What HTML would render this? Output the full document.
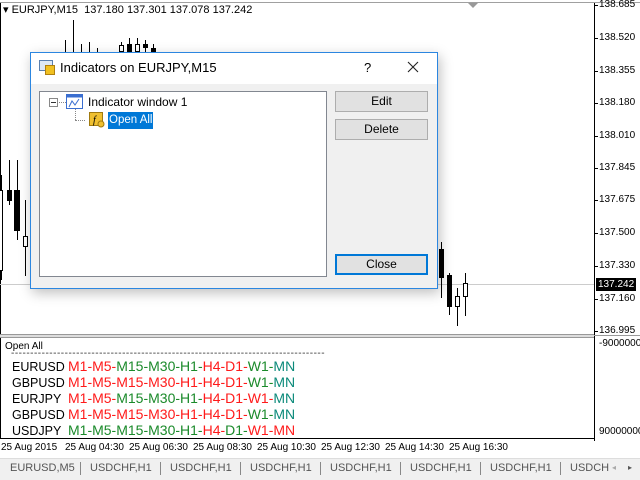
<!DOCTYPE html>
<html><head><style>
*{margin:0;padding:0;box-sizing:border-box}
body{width:640px;height:480px;overflow:hidden;background:#fff;position:relative;font-family:"Liberation Sans",sans-serif;font-size:11px;color:#000}
.a{position:absolute;white-space:nowrap}
.pl{position:absolute;left:599px;font-size:10px;line-height:12px}
.tk{position:absolute;left:594px;width:4px;height:1px;background:#000}
.ind{position:absolute;left:12px;font-family:"Liberation Sans",sans-serif;font-size:14px;line-height:18px;white-space:nowrap}
.ind b{font-weight:normal;display:inline-block;width:56px;font-size:12.5px}
.r{color:#ff1a1a}.g{color:#1a8a2a}.t{color:#0b8a7a}
.btn{position:absolute;left:335px;width:93px;height:21px;background:#e1e1e1;border:1px solid #adadad;text-align:center;line-height:19px;font-family:"Liberation Sans",sans-serif;font-size:12px}
.tab{position:absolute;top:460px;font-size:11px;color:#555;line-height:16px}
.sep{position:absolute;top:462px;width:1px;height:13px;background:#888}
.tl{position:absolute;top:442px;font-size:10px}
</style></head><body>
<div class="a" style="left:0;top:2px;width:640px;height:1px;background:#a0a0a0"></div>
<div class="a" style="left:0;top:3px;width:1px;height:435px;background:#000"></div>
<div class="a" style="left:594px;top:3px;width:1px;height:438px;background:#000"></div>
<div class="a" style="left:3px;top:4px;font-size:11px;line-height:13px">▾ EURJPY,M15&nbsp; 137.180 137.301 137.078 137.242</div>
<div class="a" style="left:468px;top:3px;width:0;height:0;border-left:5px solid transparent;border-right:5px solid transparent;border-top:5px solid #999"></div>
<svg class="a" style="left:0;top:0" width="594" height="335">
<line x1="0" y1="284.5" x2="594" y2="284.5" stroke="#ccc"/>
<g stroke="#000" fill="#fff" shape-rendering="crispEdges">
<line x1="65.5" y1="52" x2="65.5" y2="40"/>
<line x1="73.5" y1="20" x2="73.5" y2="52"/>
<line x1="81.5" y1="44" x2="81.5" y2="52"/>
<line x1="89.5" y1="42" x2="89.5" y2="52"/>
<line x1="97.5" y1="48" x2="97.5" y2="52"/>
<line x1="121.5" y1="42" x2="121.5" y2="52"/><rect x="119.5" y="45.5" width="4" height="6"/>
<line x1="129.5" y1="38" x2="129.5" y2="52"/><rect x="127.5" y="44.5" width="4" height="7" fill="#000"/>
<line x1="137.5" y1="38" x2="137.5" y2="52"/><rect x="135.5" y="44.5" width="4" height="7"/>
<line x1="145.5" y1="40" x2="145.5" y2="52"/><rect x="143.5" y="44.5" width="4" height="3" fill="#000"/>
<line x1="153.5" y1="44" x2="153.5" y2="52"/><rect x="151.5" y="48.5" width="4" height="3" fill="#000"/>
<line x1="1.5" y1="175" x2="1.5" y2="280"/><rect x="-1.5" y="190.5" width="4" height="80"/>
<line x1="9.5" y1="160" x2="9.5" y2="205"/><rect x="7.5" y="190.5" width="4" height="10" fill="#000"/>
<line x1="17.5" y1="160" x2="17.5" y2="240"/><rect x="14.5" y="190.5" width="5" height="40" fill="#000"/>
<line x1="25.5" y1="200" x2="25.5" y2="276"/><rect x="23.5" y="236.5" width="4" height="10"/>
<line x1="441.5" y1="242" x2="441.5" y2="298"/><rect x="439.5" y="249.5" width="4" height="28" fill="#000"/>
<line x1="449.5" y1="273" x2="449.5" y2="315"/><rect x="447.5" y="275.5" width="4" height="31" fill="#000"/>
<line x1="457.5" y1="288" x2="457.5" y2="326"/><rect x="455.5" y="296.5" width="4" height="10"/>
<line x1="465.5" y1="273" x2="465.5" y2="316"/><rect x="463.5" y="283.5" width="4" height="13"/>
</g></svg>
<div class="tk" style="top:5px"></div><div class="pl" style="top:-1px">138.685</div>
<div class="tk" style="top:38px"></div><div class="pl" style="top:32px">138.520</div>
<div class="tk" style="top:71px"></div><div class="pl" style="top:65px">138.355</div>
<div class="tk" style="top:103px"></div><div class="pl" style="top:97px">138.180</div>
<div class="tk" style="top:136px"></div><div class="pl" style="top:130px">138.010</div>
<div class="tk" style="top:168px"></div><div class="pl" style="top:162px">137.845</div>
<div class="tk" style="top:200px"></div><div class="pl" style="top:194px">137.675</div>
<div class="tk" style="top:233px"></div><div class="pl" style="top:227px">137.500</div>
<div class="tk" style="top:266px"></div><div class="pl" style="top:260px">137.330</div>
<div class="a" style="left:596px;top:278px;width:40px;height:13px;background:#000;color:#fff;font-size:10px;line-height:13px;padding-left:2px">137.242</div>
<div class="tk" style="top:299px"></div><div class="pl" style="top:293px">137.160</div>
<div class="tk" style="top:331px"></div><div class="pl" style="top:325px">136.995</div>
<div class="a" style="left:0;top:334px;width:594px;height:4px;border-top:1px solid #999;border-bottom:1px solid #999;background:#ddd"></div>
<div class="a" style="left:594px;top:335px;width:46px;height:3px;border-top:1px solid #999"></div>
<div class="pl" style="top:338px">-9000000</div>
<div class="pl" style="top:426px">90000000</div>
<div class="a" style="left:0;top:438px;width:595px;height:1px;background:#000"></div>
<div class="a" style="left:5px;top:341px;font-size:10px">Open All</div>
<div class="a" style="left:11px;top:348px;font-size:10px;letter-spacing:0.5px;color:#333;overflow:hidden;width:314px">------------------------------------------------------------------------------------</div>
<div class="ind" style="top:357px"><b>EURUSD</b><span class="r">M1-M5-</span><span class="g">M15-</span><span class="g">M30-</span><span class="g">H1-</span><span class="r">H4-D1-</span><span class="g">W1-</span><span class="t">MN</span></div>
<div class="ind" style="top:373px"><b>GBPUSD</b><span class="r">M1-M5-M15-M30-H1-H4-D1-</span><span class="g">W1-</span><span class="t">MN</span></div>
<div class="ind" style="top:389px"><b>EURJPY</b><span class="r">M1-M5-</span><span class="g">M15-M30-H1-</span><span class="r">H4-D1-W1-</span><span class="t">MN</span></div>
<div class="ind" style="top:405px"><b>GBPUSD</b><span class="r">M1-M5-M15-M30-H1-H4-D1-</span><span class="g">W1-</span><span class="t">MN</span></div>
<div class="ind" style="top:421px"><b>USDJPY</b><span class="g">M1-M5-M15-M30-H1-</span><span class="r">H4-</span><span class="g">D1-</span><span class="r">W1-MN</span></div>
<div class="tl" style="left:1px">25 Aug 2015</div>
<div class="tl" style="left:65px">25 Aug 04:30</div>
<div class="tl" style="left:129px">25 Aug 06:30</div>
<div class="tl" style="left:193px">25 Aug 08:30</div>
<div class="tl" style="left:257px">25 Aug 10:30</div>
<div class="tl" style="left:321px">25 Aug 12:30</div>
<div class="tl" style="left:385px">25 Aug 14:30</div>
<div class="tl" style="left:449px">25 Aug 16:30</div>
<div class="a" style="left:0;top:458px;width:640px;height:22px;background:#f0f0f0;border-top:1px solid #ddd"></div>
<div class="tab" style="left:10px">EURUSD,M5</div><div class="sep" style="left:80px"></div>
<div class="tab" style="left:90px">USDCHF,H1</div><div class="sep" style="left:160px"></div>
<div class="tab" style="left:170px">USDCHF,H1</div><div class="sep" style="left:240px"></div>
<div class="tab" style="left:250px">USDCHF,H1</div><div class="sep" style="left:320px"></div>
<div class="tab" style="left:330px">USDCHF,H1</div><div class="sep" style="left:400px"></div>
<div class="tab" style="left:410px">USDCHF,H1</div><div class="sep" style="left:480px"></div>
<div class="tab" style="left:490px">USDCHF,H1</div><div class="sep" style="left:560px"></div>
<div class="tab" style="left:570px;width:40px;overflow:hidden">USDCH</div>
<div class="tab" style="left:612px;color:#aaa;font-size:8px">◂</div><div class="tab" style="left:628px;font-size:8px">▸</div>

<div class="a" style="left:30px;top:52px;width:408px;height:237px;background:#f0f0f0;border:1px solid #2b86e0;box-shadow:2px 4px 12px rgba(0,0,0,0.25)">
 <div class="a" style="left:0;top:0;width:406px;height:31px;background:#fff"></div>
 <svg class="a" style="left:8px;top:7px" width="17" height="16"><rect x="0.5" y="0.5" width="13" height="10" fill="#dde8f5" stroke="#5a7fae"/><rect x="6.5" y="5.5" width="9" height="9" fill="#f0c020" stroke="#b08010"/></svg>
 <div class="a" style="left:29px;top:7px;font-size:13px">Indicators on EURJPY,M15</div>
 <div class="a" style="left:333px;top:7px;font-size:13px">?</div>
 <svg class="a" style="left:376px;top:8px" width="12" height="12"><path d="M1 1L11 11M11 1L1 11" stroke="#222" stroke-width="1.1"/></svg>
 <div class="a" style="left:8px;top:38px;width:288px;height:186px;background:#fff;border:1px solid #828790"></div>
 <div class="a" style="left:18px;top:45px;width:9px;height:9px;border:1px solid #888;background:#fff"></div>
 <div class="a" style="left:20px;top:49px;width:5px;height:1px;background:#333"></div>
 <div class="a" style="left:28px;top:49px;width:7px;border-top:1px dotted #888"></div>
 <div class="a" style="left:44px;top:53px;width:1px;height:14px;border-left:1px dotted #888"></div>
 <div class="a" style="left:44px;top:67px;width:10px;border-top:1px dotted #888"></div>
 <svg class="a" style="left:35px;top:41px" width="18" height="16"><rect x="0.5" y="0.5" width="16" height="14" fill="#fff" stroke="#3a6ed0"/><rect x="0.5" y="0.5" width="16" height="3" fill="#3a6ed0"/><path d="M3 13 L6 7 L9 11 L13 5" fill="none" stroke="#3a6ed0"/></svg>
 <div class="a" style="left:57px;top:42px;font-size:12px">Indicator window 1</div>
 <svg class="a" style="left:58px;top:59px" width="16" height="16"><rect x="0.5" y="0.5" width="13" height="13" fill="#f0c030" stroke="#a07a10"/><text x="4" y="11" font-size="10" font-style="italic" font-family="Liberation Serif">f</text><circle cx="12" cy="12" r="3" fill="#f0c030" stroke="#a07a10"/></svg>
 <div class="a" style="left:77px;top:59px;width:45px;height:17px;background:#0078d7;color:#fff;font-size:11.5px;line-height:17px;padding-left:1px;overflow:hidden">Open All</div>
</div>
<div class="btn" style="top:91px">Edit</div>
<div class="btn" style="top:119px">Delete</div>
<div class="btn" style="top:254px;border:2px solid #0078d7;line-height:17px">Close</div>
</body></html>
